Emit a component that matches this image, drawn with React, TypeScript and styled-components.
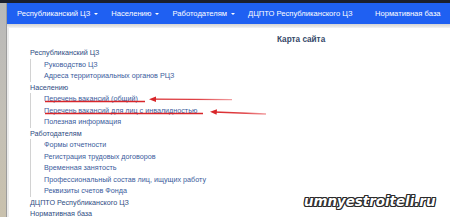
import React from "react";
import styled, { createGlobalStyle } from "styled-components";

const GlobalStyle = createGlobalStyle`
  html, body {
    margin: 0;
    padding: 0;
    width: 450px;
    height: 217px;
    overflow: hidden;
    background: #ffffff;
    font-family: "Liberation Sans", Arial, sans-serif;
  }
`;

const Page = styled.div`
  position: relative;
  width: 450px;
  height: 217px;
  display: flex;
  flex-direction: column;
  overflow: hidden;
`;

const TopStrip = styled.div`
  height: 3px;
  background: #1b1f2e;
  flex-shrink: 0;
`;

const Row = styled.div`
  flex: 1;
  display: flex;
  min-height: 0;
`;

const Backdrop = styled.div`
  width: 6px;
  flex-shrink: 0;
  background: linear-gradient(180deg, #b9b9b9 0%, #c4c0b6 55%, #c9c1ad 100%);
`;

const Window = styled.div`
  flex: 1;
  display: flex;
  flex-direction: column;
  border-left: 1px solid #9c9c9c;
  min-width: 0;
`;

const NavBar = styled.nav`
  height: 21px;
  flex-shrink: 0;
  background: #1f60f2;
  display: flex;
  align-items: center;
  padding-left: 3.25px;
  white-space: nowrap;
`;

const NavItem = styled.span<{ $spaced?: boolean }>`
  display: flex;
  align-items: center;
  padding: 0 6.75px;
  margin-left: ${(p) => (p.$spaced ? "9px" : "0")};
  color: #ffffff;
  font-size: 7.6px;
`;

const Caret = styled.span`
  display: inline-block;
  margin-left: 3.5px;
  width: 0;
  height: 0;
  border-left: 2.3px solid transparent;
  border-right: 2.3px solid transparent;
  border-top: 2.8px solid #ffffff;
`;

const NavShadow = styled.div`
  height: 4px;
  flex-shrink: 0;
  background: linear-gradient(180deg, #d4d4d4 0%, #e6e6e6 60%, #f4f4f4 100%);
`;

const Content = styled.main`
  flex: 1;
  background: #ffffff;
  border-left: 2px solid #ececec;
  padding: 6px 0 0 21px;
`;

const Title = styled.h1`
  margin: 0 0 2px 247px;
  font-size: 8.2px;
  line-height: 11px;
  font-weight: 700;
  color: #354868;
`;

const Tree = styled.ul`
  list-style: none;
  margin: 0;
  padding: 0;
`;

const Node = styled.li`
  font-size: 7.2px;
  line-height: 11.5px;
  color: #2e4c82;
  white-space: nowrap;
`;

const Children = styled.ul`
  list-style: none;
  margin: 0;
  padding: 0 0 0 13px;
  border-left: 1.5px solid #d2d2d2;
`;

const Leaf = styled.li`
  font-size: 7.2px;
  line-height: 11.5px;
  color: #3a5c9c;
  white-space: nowrap;
`;

const Annotations = styled.svg`
  position: absolute;
  left: 0;
  top: 0;
  width: 450px;
  height: 217px;
  pointer-events: none;
`;

const Watermark = styled.div`
  position: absolute;
  left: 304px;
  top: 193px;
  font-family: "DejaVu Sans", sans-serif;
  font-style: italic;
  font-weight: 700;
  font-size: 13.4px;
  line-height: 18px;
  color: #ffffff;
  text-shadow: 1px 0 0 #2a2a2a, -1px 0 0 #2a2a2a, 0 1px 0 #2a2a2a,
    0 -1px 0 #2a2a2a, 1px 1px 0 #2a2a2a, -1px -1px 0 #2a2a2a,
    1px -1px 0 #2a2a2a, -1px 1px 0 #2a2a2a;
`;

type Section = { title: string; items?: string[] };

const sections: Section[] = [
  {
    title: "Республиканский ЦЗ",
    items: ["Руководство ЦЗ", "Адреса территориальных органов РЦЗ"],
  },
  {
    title: "Населению",
    items: [
      "Перечень вакансий (общий)",
      "Перечень вакансий для лиц с инвалидностью",
      "Полезная информация",
    ],
  },
  {
    title: "Работодателям",
    items: [
      "Формы отчетности",
      "Регистрация трудовых договоров",
      "Временная занятость",
      "Профессиональный состав лиц, ищущих работу",
      "Реквизиты счетов Фонда",
    ],
  },
  { title: "ДЦПТО Республиканского ЦЗ" },
  { title: "Нормативная база" },
];

const navItems = [
  { label: "Республиканский ЦЗ", caret: true },
  { label: "Населению", caret: true },
  { label: "Работодателям", caret: true },
  { label: "ДЦПТО Республиканского ЦЗ", caret: false },
  { label: "Нормативная база", caret: false, spaced: true },
];

export default function App() {
  return (
    <Page>
      <GlobalStyle />
      <TopStrip />
      <Row>
        <Backdrop />
        <Window>
          <NavBar>
            {navItems.map((n) => (
              <NavItem key={n.label} $spaced={n.spaced}>
                {n.label}
                {n.caret && <Caret />}
              </NavItem>
            ))}
          </NavBar>
          <NavShadow />
          <Content>
            <Title>Карта сайта</Title>
            <Tree>
              {sections.map((s) => (
                <React.Fragment key={s.title}>
                  <Node>{s.title}</Node>
                  {s.items && (
                    <Children>
                      {s.items.map((i) => (
                        <Leaf key={i}>{i}</Leaf>
                      ))}
                    </Children>
                  )}
                </React.Fragment>
              ))}
            </Tree>
          </Content>
        </Window>
      </Row>

      <Annotations viewBox="0 0 450 217">
        <defs>
          <linearGradient id="fade1" x1="150" y1="0" x2="232" y2="0" gradientUnits="userSpaceOnUse">
            <stop offset="0" stopColor="#d8262a" />
            <stop offset="0.6" stopColor="#e04448" />
            <stop offset="1" stopColor="#f2a0a2" />
          </linearGradient>
          <linearGradient id="fade2" x1="211" y1="0" x2="266" y2="0" gradientUnits="userSpaceOnUse">
            <stop offset="0" stopColor="#d8262a" />
            <stop offset="0.6" stopColor="#e04448" />
            <stop offset="1" stopColor="#f2a0a2" />
          </linearGradient>
        </defs>
        <line x1="45" y1="101.5" x2="145" y2="101.5" stroke="#d8262a" strokeWidth="1.3" />
        <line x1="45" y1="113.5" x2="203" y2="113.5" stroke="#d8262a" strokeWidth="1.3" />
        <line x1="153" y1="99.2" x2="232" y2="99.6" stroke="url(#fade1)" strokeWidth="1.3" />
        <polygon points="149,99.2 156,96.4 156,102" fill="#d8262a" />
        <line x1="214" y1="112" x2="266" y2="114" stroke="url(#fade2)" strokeWidth="1.3" />
        <polygon points="210,111.8 217,109.3 216.6,114.8" fill="#d8262a" />
      </Annotations>

      <Watermark>umnyestroiteli.ru</Watermark>
    </Page>
  );
}
